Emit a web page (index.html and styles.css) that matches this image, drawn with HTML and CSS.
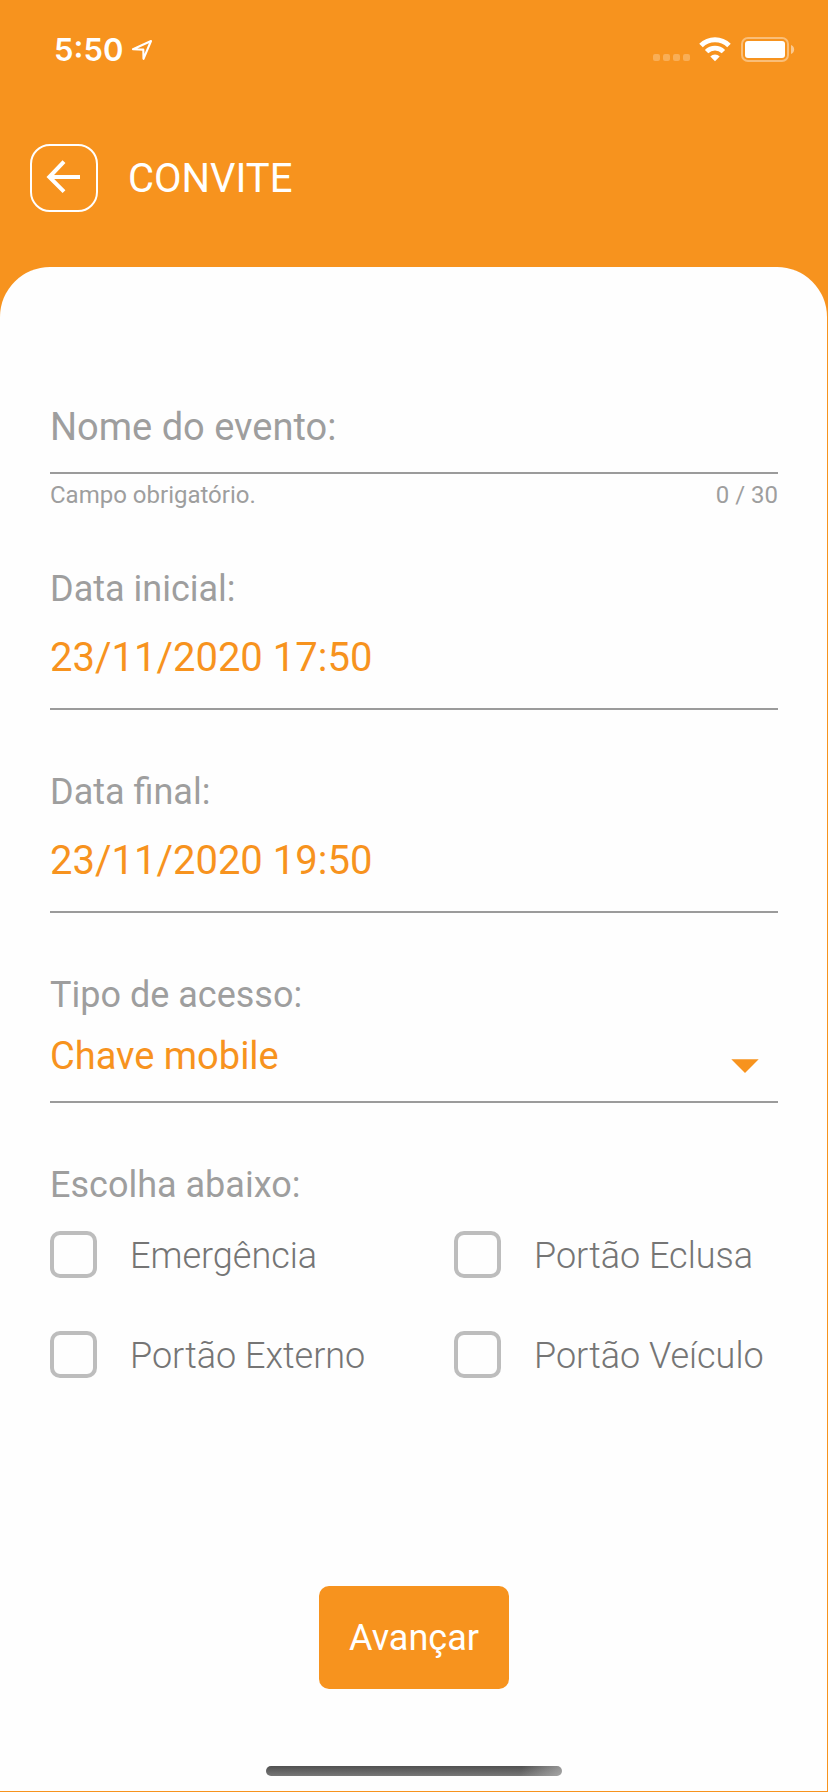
FILE: index.html
```html
<!DOCTYPE html>
<html lang="pt-BR">
<head>
<meta charset="utf-8">
<title>Convite</title>
<link rel="stylesheet" href="styles.css">
</head>
<body>
<div class="screen">
  <div class="status-bar">
    <div class="status-left">
      <span class="time">5:50</span>
      <svg class="location" width="22" height="22" viewBox="0 0 22 22"><path d="M2 10.2 20 2 12.5 19.8 12.3 10.6Z" fill="none" stroke="#fff" stroke-width="2.1" stroke-linejoin="round"/></svg>
    </div>
    <div class="status-right">
      <div class="signal"><i class="dot"></i><i class="dot"></i><i class="dot"></i><i class="dot"></i></div>
      <svg class="wifi" width="32" height="25" viewBox="0 0 32 25">
        <path d="M2 8.6a19.8 19.8 0 0 1 28 0" fill="none" stroke="#fff" stroke-width="5"/>
        <path d="M7.6 14.6a11.9 11.9 0 0 1 16.8 0" fill="none" stroke="#fff" stroke-width="4.8"/>
        <path d="M11.3 19.5a6.8 6.8 0 0 1 9.4 0L16 24.2Z" fill="#fff"/>
      </svg>
      <svg class="battery" width="54" height="25" viewBox="0 0 54 25">
        <rect x="1" y="1" width="46" height="23" rx="6" fill="none" stroke="#fff" stroke-opacity=".4" stroke-width="2"/>
        <rect x="4" y="4" width="40" height="17" rx="3" fill="#fff"/>
        <path d="M50 8a4.8 4.8 0 0 1 0 9Z" fill="#fff" fill-opacity=".5"/>
      </svg>
    </div>
  </div>
  <header class="app-bar">
    <button class="back" aria-label="Voltar">
      <svg width="36" height="36" viewBox="0 0 36 36"><path d="M34 17H4M18 1.7 3.3 17 18 31.7" fill="none" stroke="#fff" stroke-width="4"/></svg>
    </button>
    <h1 class="title">CONVITE</h1>
  </header>
  <main class="sheet">
    <div class="field name-field"><span class="placeholder">Nome do evento:</span></div>
    <div class="helper"><span>Campo obrigatório.</span><span>0 / 30</span></div>
    <section class="group">
      <div class="label">Data inicial:</div>
      <div class="field date-field">23/11/2020 17:50</div>
    </section>
    <section class="group">
      <div class="label">Data final:</div>
      <div class="field date-field">23/11/2020 19:50</div>
    </section>
    <section class="group">
      <div class="label">Tipo de acesso:</div>
      <div class="field select-field"><span>Chave mobile</span>
        <svg class="caret" width="28" height="14" viewBox="0 0 28 14"><path d="M.3.2h27.4L14 13.9Z" fill="#f7931e"/></svg>
      </div>
    </section>
    <section class="group">
      <div class="label">Escolha abaixo:</div>
      <div class="options">
        <div class="option"><span class="box"></span><span class="option-text">Emergência</span></div>
        <div class="option"><span class="box"></span><span class="option-text">Portão Eclusa</span></div>
        <div class="option"><span class="box"></span><span class="option-text">Portão Externo</span></div>
        <div class="option"><span class="box"></span><span class="option-text">Portão Veículo</span></div>
      </div>
    </section>
    <button class="next">Avançar</button>
    <div class="home-indicator"></div>
  </main>
</div>
</body>
</html>
```
FILE: styles.css
```css
* { box-sizing: border-box; }
body { margin: 0; font-family: Roboto, sans-serif; background: #f7931e; }
button { padding: 0; margin: 0; font-family: inherit; }
svg { display: block; flex: none; }
.screen { width: 828px; height: 1792px; display: flex; flex-direction: column; background: #f7931e; overflow: hidden; }

.status-bar { height: 144px; flex: none; display: flex; justify-content: space-between; padding: 30px 33px 0 54px; }
.status-left { display: flex; height: 40px; }
.time { width: 77px; font: 600 31px/40px Inter, sans-serif; color: #fff; white-space: nowrap; }
.location { margin-top: 9px; }
.status-right { display: flex; padding-top: 7px; height: 32px; }
.signal { display: flex; gap: 3px; margin: 17px 9px 0 0; }
.dot { width: 7px; height: 7px; border-radius: 2px; background: rgba(255,255,255,.25); }
.battery { margin-left: 10px; }

.app-bar { height: 123px; flex: none; display: flex; align-items: flex-start; gap: 30px; padding-left: 30px; }
.back { width: 68px; height: 68px; border: 2px solid #fff; border-radius: 20px; background: none; display: flex; align-items: center; justify-content: center; }
.title { margin: 0; padding-top: 11px; font-size: 40px; font-weight: 400; line-height: 48px; color: #fff; }

.sheet { width: 827px; height: 1524px; flex: none; display: flex; flex-direction: column; padding: 137px 49px 0 50px; background: #fefefe; border-radius: 50px 50px 0 0; }
.field { border-bottom: 2px solid #9b9b9b; }
.name-field { padding-bottom: 22px; font-size: 38px; line-height: 46px; color: #9e9e9e; }
.helper { display: flex; justify-content: space-between; margin: 6px 0 -3px; font-size: 24px; line-height: 30px; color: #9e9e9e; }
.group { margin-top: 61px; }
.label { font-size: 36px; line-height: 42px; color: #9e9e9e; }
.date-field { margin-top: 24px; padding-bottom: 26px; font-size: 40px; line-height: 48px; color: #f7931e; }
.select-field { display: flex; justify-content: space-between; margin-top: 17px; padding-bottom: 22px; font-size: 38px; line-height: 46px; color: #f7931e; }
.caret { margin: 26px 19px 0 0; }
.options { display: grid; grid-template-columns: 404px 1fr; row-gap: 53px; margin-top: 25px; }
.option { display: flex; gap: 33px; height: 47px; }
.box { width: 47px; height: 47px; flex: none; border: 4px solid #bdbdbd; border-radius: 10px; }
.option-text { padding-top: 2px; font-size: 36px; font-weight: 300; line-height: 47px; color: #757575; white-space: nowrap; }
.next { align-self: center; width: 190px; height: 103px; margin: 208px 0 0; border: 0; border-radius: 10px; background: #f7931e; color: #fff; font-size: 36px; line-height: 42px; }
.home-indicator { align-self: center; width: 296px; height: 10px; margin: 77px 0 0; border-radius: 5px; background: linear-gradient(100deg, transparent 86%, rgba(190,190,190,.65) 100%), linear-gradient(#505050, #777); }
```
